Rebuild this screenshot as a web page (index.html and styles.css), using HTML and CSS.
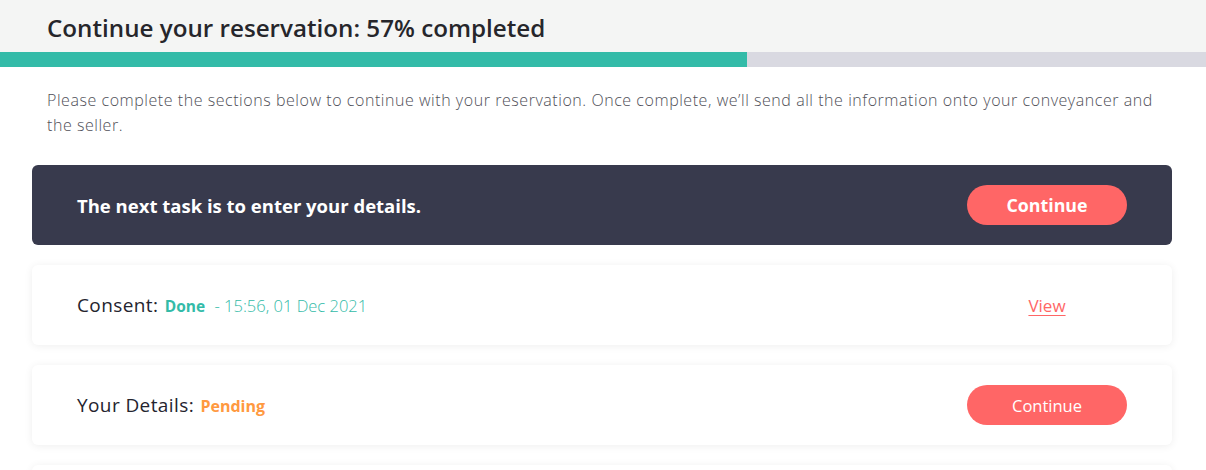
FILE: index.html
```html
<!DOCTYPE html>
<html lang="en">
<head>
<meta charset="utf-8">
<title>Continue your reservation</title>
<link rel="stylesheet" href="styles.css">
</head>
<body>
  <header class="top">
    <h1 class="title">Continue your reservation: 57% completed</h1>
  </header>
  <div class="progress"><div class="progress-fill" style="width: 61.9%"></div></div>
  <main class="content">
    <p class="intro">Please complete the sections below to continue with your reservation. Once complete, we’ll send all the information onto your conveyancer and the seller.</p>
    <section class="banner">
      <span class="banner-text">The next task is to enter your details.</span>
      <div class="action"><button class="btn btn-bold">Continue</button></div>
    </section>
    <section class="card">
      <div class="card-label">Consent: <span class="status done">Done</span> <span class="stamp">- 15:56, 01 Dec 2021</span></div>
      <div class="action"><a class="view" href="#">View</a></div>
    </section>
    <section class="card">
      <div class="card-label">Your Details: <span class="status pending">Pending</span></div>
      <div class="action"><button class="btn">Continue</button></div>
    </section>
    <section class="card"></section>
  </main>
</body>
</html>
```
FILE: styles.css
```css
* { box-sizing: border-box; }
html, body { margin: 0; padding: 0; background: #ffffff; }
body {
  font-family: "Open Sans", "Liberation Sans", sans-serif;
  color: #24242e;
  overflow: hidden;
  height: 470px;
}
.top {
  background: #f4f5f4;
  height: 52px;
  display: flex;
  align-items: center;
  padding: 0 47px;
}
.title {
  margin: 0;
  font-size: 24.2px;
  font-weight: 600;
  color: #26262b;
  padding-top: 2px;
}
.progress {
  height: 15px;
  background: #d9d9e1;
}
.progress-fill {
  height: 100%;
  background: #33bba8;
}
.content {
  padding: 0 34px 0 32px;
}
.intro {
  margin: 21px 15px 27px 15px;
  font-weight: 300;
  font-size: 16px;
  letter-spacing: 0.55px;
  line-height: 25px;
  color: #505058;
}
.banner, .card {
  height: 80px;
  border-radius: 6px;
  display: flex;
  align-items: center;
  justify-content: space-between;
  padding: 0 45px;
  margin-bottom: 20px;
}
.banner {
  background: #383a4d;
}
.banner-text {
  color: #ffffff;
  font-size: 18.5px;
  font-weight: 700;
}
.card {
  background: #ffffff;
  box-shadow: 0 1px 8px rgba(0, 0, 0, 0.07);
}
.card-label {
  font-size: 19px;
  letter-spacing: 0.4px;
  color: #24242e;
}
.status {
  font-size: 15.5px;
  font-weight: 700;
  letter-spacing: 0;
  margin-left: 1px;
}
.pending { font-size: 16px; }
.done { color: #33bba8; }
.pending { color: #ff9940; }
.stamp {
  color: #33bba8;
  font-weight: 300;
  font-size: 16.5px;
  letter-spacing: 0;
  margin-left: 4px;
}
.action {
  width: 160px;
  display: flex;
  justify-content: center;
}
.btn {
  width: 160px;
  height: 40px;
  border: none;
  border-radius: 20px;
  background: #ff6666;
  color: #ffffff;
  font-family: "Open Sans", "Liberation Sans", sans-serif;
  font-size: 16.5px;
  font-weight: 400;
  cursor: pointer;
}
.btn-bold { font-weight: 700; font-size: 17.8px; }
.view {
  color: #ff6666;
  font-size: 17px;
  text-decoration: underline;
  text-underline-offset: 3px;
}
```
